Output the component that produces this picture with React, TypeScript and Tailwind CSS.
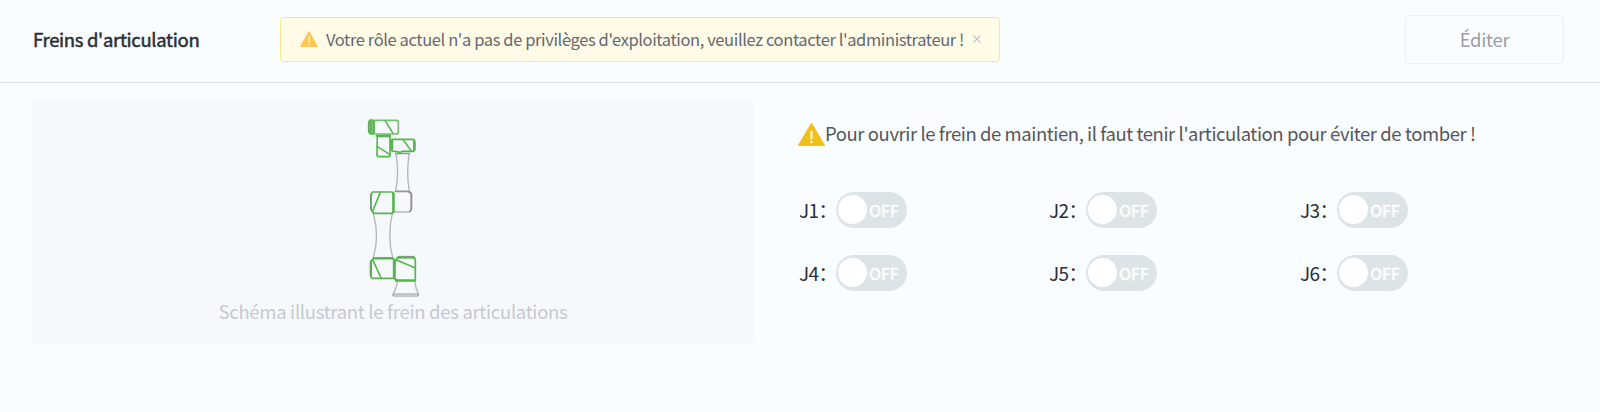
import React from "react";

function WarningIcon({ className, mark }: { className: string; mark: string }) {
  return (
    <svg viewBox="0 0 80 70" className={className} preserveAspectRatio="none">
      <path d="M40 2 L78 68 H2 Z" fill="currentColor" stroke="currentColor" strokeWidth="4" strokeLinejoin="round" />
      <path d="M40 27 V47" stroke={mark} strokeWidth="6.5" strokeLinecap="round" />
      <circle cx="40" cy="58" r="3.8" fill={mark} />
    </svg>
  );
}

function RobotArm() {
  return (
    <svg width="75" height="200" viewBox="0 0 225 600" fill="none" strokeLinejoin="round" strokeLinecap="round">
      <g stroke="#b3b6bc" strokeWidth="4">
        <path d="M122 130 H163 M123 131 Q133 187 122 243 M163 131 Q153 187 163 243" />
        <path d="M120 306 H160 Q168 305 168 298" />
        <path d="M55 311 Q74 378 55 442 M112 311 Q96 378 113 442" />
        <path d="M127 517 Q124 536 115 551 M180 517 Q182 536 190 551" />
      </g>
      <g stroke="#92949e">
        <path d="M122 131 H163" strokeWidth="4" />
        <path d="M121 244 H162" strokeWidth="5" />
        <path d="M162 246 Q169 247 169 255 V294 Q169 301 165 304" strokeWidth="6" />
        <path d="M55 443 H113" strokeWidth="4" />
        <path d="M115 552 H190 V558 H115 Z" strokeWidth="3" />
      </g>
      <g stroke="#55b64b" strokeWidth="5">
        <path d="M58 31 H124 Q130 31 130 38 V66 Q130 72 124 72 H58 Z" stroke="#75be72" />
        <path d="M46 30 H52 Q56 30 56 36 V66 Q56 72 51 72 H46 Q41 69 41 62 V39 Q41 32 46 30 Z" fill="#8acb85" />
        <path d="M48 33 V69" />
        <path d="M91 33 L114 70" strokeWidth="4.5" />
        <path d="M67 77 H105 V134 Q105 140 99 140 H72 Q66 140 66 133 Z" />
        <path d="M67 78 H105" strokeWidth="7" />
        <path d="M67 110 L104 133" strokeWidth="4.5" />
        <path d="M112 88 H173 Q179 88 179 95 V118 Q179 124 173 124 H142 L137 127 L112 123 Z" />
        <path d="M109 91 V121 M177 92 V121" strokeWidth="6" />
        <path d="M145 90 L169 123" strokeWidth="4.5" />
        <path d="M53 246 H110 Q116 246 116 253 V304 Q116 310 110 310 H56 L48 299 V253 Z" />
        <path d="M115 251 V305" strokeWidth="7" />
        <path d="M76 247 L53 303 M48 255 V297" strokeWidth="5" />
        <path d="M55 446 H116 V505 H52 Q48 503 48 498 V453 Z" />
        <path d="M48 454 V500 M119 450 V506" strokeWidth="6" />
        <path d="M53 449 L78 504" strokeWidth="5" />
        <path d="M121 454 Q125 443 132 442 H174 Q181 443 181 451 V511 H125 L119 505 V454" />
        <path d="M130 442 H177 M123 512 H180" strokeWidth="7" />
        <path d="M125 450 L179 473" strokeWidth="5" />
      </g>
      <path d="M41 39 V64 M47 254 V298 M45 456 V496 M130 439 H176 M181 95 V118" stroke="#888b90" strokeWidth="2" />
    </svg>
  );
}

function JointSwitch({ label }: { label: string }) {
  return (
    <div className="flex h-9 items-center">
      <span className="w-[37px] whitespace-nowrap text-[19px] leading-[30px] tracking-[-0.6px] text-[#2c2f36]">{label}：</span>
      <button
        type="button"
        disabled
        className="flex h-9 w-[71px] shrink-0 items-center rounded-full bg-[#dde4e7] pl-0.5 text-[16px] font-medium tracking-[-0.2px] text-white/85"
      >
        <span className="mb-px size-[29px] shrink-0 rounded-full bg-white" />
        <span className="mb-px ml-[2px] [-webkit-text-stroke:0.3px]">OFF</span>
      </button>
    </div>
  );
}

export default function App() {
  return (
    <main className="h-[412px] w-[1600px] overflow-hidden bg-[#fafdff] font-['Noto_Sans_CJK_SC',sans-serif]">
      <header className="flex h-[83px] items-start border-b border-[#dde1e6] pl-8 pr-9">
        <h1 className="mt-6 w-[248px] whitespace-nowrap pl-px text-[18.5px] leading-[30px] tracking-[-0.32px] text-[#2b2e35] [-webkit-text-stroke:0.5px_#2b2e35]">
          Freins d'articulation
        </h1>
        <div className="mt-[17px] flex h-[45px] w-[720px] items-center rounded border border-[#fae693] bg-[#fffbe6] pl-[19px]">
          <WarningIcon className="mb-[2px] h-[16px] w-[18px] shrink-0 text-[#ffc84d]" mark="#fff3c9" />
          <span className="mb-0.5 ml-2 whitespace-nowrap text-[16.5px] leading-[28px] tracking-[-0.39px] text-[#666871]">
            Votre rôle actuel n'a pas de privilèges d'exploitation, veuillez contacter l'administrateur !
          </span>
          <svg viewBox="0 0 8 8" className="mb-px ml-[9px] size-2 shrink-0" stroke="#c3c5c6" strokeWidth="1.1">
            <path d="M.5 .5 L7.5 7.5 M7.5 .5 L.5 7.5" />
          </svg>
        </div>
        <button
          type="button"
          disabled
          className="mt-[15px] ml-auto h-[49px] w-[159px] rounded border border-[#edf0f4] text-[18.5px] tracking-[-0.3px] text-[#9b9da4]"
        >
          Éditer
        </button>
      </header>
      <section className="flex pl-8 pt-[18px]">
        <figure className="flex h-[242px] w-[722px] flex-col items-center rounded bg-[#f6f9fc]">
          <div className="mt-[9px] mr-[2px] h-[186px]">
            <RobotArm />
          </div>
          <figcaption className="whitespace-nowrap text-[18.5px] leading-[30px] tracking-[-0.3px] text-[#c5c9d0]">
            Schéma illustrant le frein des articulations
          </figcaption>
        </figure>
        <div className="ml-11 pt-[18px]">
          <p className="flex h-[30px] items-center whitespace-nowrap text-[18.5px] tracking-[-0.43px] text-[#55575c]">
            <WarningIcon className="mt-px h-[23px] w-[27px] shrink-0 text-[#efc01d]" mark="#fff4c8" />
            <span>Pour ouvrir le frein de maintien, il faut tenir l'articulation pour éviter de tomber !</span>
          </p>
          <div className="mt-[43px] ml-px grid grid-cols-[250px_251px_250px] gap-y-[27px]">
            {["J1", "J2", "J3", "J4", "J5", "J6"].map((joint) => (
              <JointSwitch key={joint} label={joint} />
            ))}
          </div>
        </div>
      </section>
    </main>
  );
}
